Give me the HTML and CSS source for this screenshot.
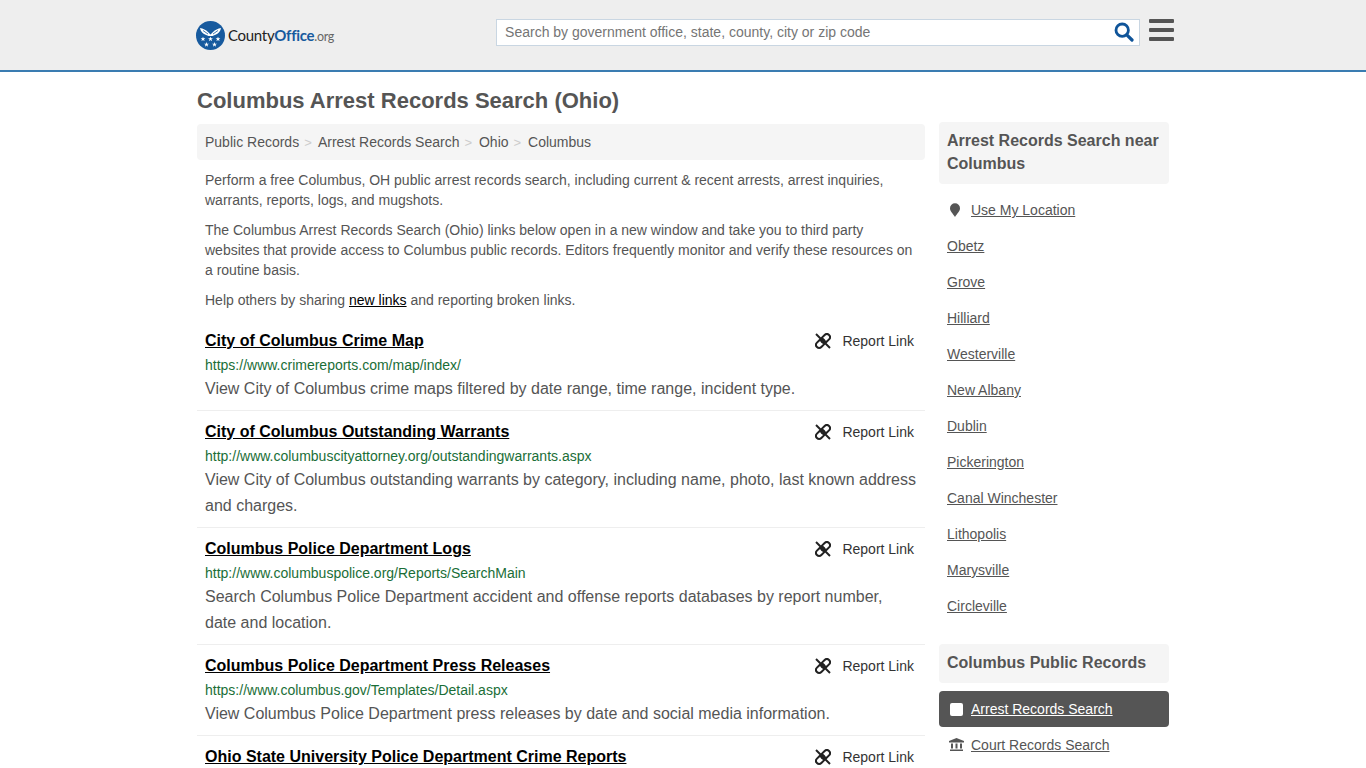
FILE: index.html
```html
<!DOCTYPE html>
<html>
<head>
    <meta charset="UTF-8">
    <title>Columbus Arrest Records Search (Ohio)</title>
    <link rel="stylesheet" href="styles.css">
</head>
<body>
    <svg class="icon-defs" width="0" height="0">
        <symbol id="unlink" viewBox="0 0 16 16">
            <g fill="none" stroke="currentColor" stroke-width="2">
                <rect x="5.500" y="2.400" width="10" height="6.200" rx="3.100" transform="rotate(-45 10.500 5.500)"/>
                <rect x="0.500" y="7.400" width="10" height="6.200" rx="3.100" transform="rotate(-45 5.500 10.500)"/>
                <path d="M1 1 15 15"/>
            </g>
        </symbol>
        <symbol id="star" viewBox="0 0 10 10">
            <path d="M5 0 6.200 3.500H10L7 5.700 8.100 9.500 5 7.200 1.900 9.500 3 5.700 0 3.500H3.800z" fill="#fff"/>
        </symbol>
    </svg>

    <div class="header">
        <div class="header-inner">
            <a class="logo" href="#">
                <svg class="logo-mark" width="29" height="29" viewBox="0 0 29 29">
                    <circle cx="14.5" cy="14.5" r="14.5" fill="#175a9e"/>
                    <path d="M4 7c3 .5 6 2 8 4l2.500 2.500L17 11c2-2 5-3.500 8-4-.5 3-2.500 5.500-5 6.500l-3.500 1.500h-4L9 13.500C6.500 12.500 4.500 10 4 7z" fill="#fff"/>
                    <path d="M7 9.500l5 3.500M22 9.500l-5 3.500" stroke="#175a9e" stroke-width=".8"/>
                    <use href="#star" x="4.500" y="15.500" width="5" height="5"/>
                    <use href="#star" x="12" y="15.500" width="5" height="5"/>
                    <use href="#star" x="19.500" y="15.500" width="5" height="5"/>
                    <use href="#star" x="8" y="21" width="5" height="5"/>
                    <use href="#star" x="16" y="21" width="5" height="5"/>
                </svg>
                <span class="logo-text">County<span class="logo-blue">Office</span><span class="logo-org">.org</span></span>
            </a>
            <div class="search-box">
                <input class="search-input" type="text" placeholder="Search by government office, state, county, city or zip code">
                <svg class="search-icon" width="20" height="20" viewBox="0 0 20 20">
                    <circle cx="8.200" cy="8.200" r="6.200" fill="none" stroke="#0f5499" stroke-width="2.800"/>
                    <path d="M12.800 12.800 18 18" stroke="#0f5499" stroke-width="3.200" stroke-linecap="round"/>
                </svg>
            </div>
            <div class="menu-button">
                <span></span>
                <span></span>
                <span></span>
            </div>
        </div>
    </div>

    <div class="page">
        <h1>Columbus Arrest Records Search (Ohio)</h1>
        <div class="columns">
            <div class="main">
                <div class="breadcrumb">
                    <a href="#">Public Records</a><span class="sep">&gt;</span>
                    <a href="#">Arrest Records Search</a><span class="sep">&gt;</span>
                    <a href="#">Ohio</a><span class="sep">&gt;</span>
                    <a href="#">Columbus</a>
                </div>
                <div class="intro">
                    <p>Perform a free Columbus, OH public arrest records search, including current &amp; recent arrests, arrest inquiries, warrants, reports, logs, and mugshots.</p>
                    <p>The Columbus Arrest Records Search (Ohio) links below open in a new window and take you to third party websites that provide access to Columbus public records. Editors frequently monitor and verify these resources on a routine basis.</p>
                    <p>Help others by sharing <a href="#">new links</a> and reporting broken links.</p>
                </div>

                <div class="result">
                    <div class="result-top">
                        <a class="result-title" href="#">City of Columbus Crime Map</a>
                        <a class="report" href="#"><svg width="16" height="16"><use href="#unlink"/></svg>Report Link</a>
                    </div>
                    <div class="result-url">https://www.crimereports.com/map/index/</div>
                    <div class="result-desc">View City of Columbus crime maps filtered by date range, time range, incident type.</div>
                </div>
                <div class="result">
                    <div class="result-top">
                        <a class="result-title" href="#">City of Columbus Outstanding Warrants</a>
                        <a class="report" href="#"><svg width="16" height="16"><use href="#unlink"/></svg>Report Link</a>
                    </div>
                    <div class="result-url">http://www.columbuscityattorney.org/outstandingwarrants.aspx</div>
                    <div class="result-desc">View City of Columbus outstanding warrants by category, including name, photo, last known address and charges.</div>
                </div>
                <div class="result">
                    <div class="result-top">
                        <a class="result-title" href="#">Columbus Police Department Logs</a>
                        <a class="report" href="#"><svg width="16" height="16"><use href="#unlink"/></svg>Report Link</a>
                    </div>
                    <div class="result-url">http://www.columbuspolice.org/Reports/SearchMain</div>
                    <div class="result-desc">Search Columbus Police Department accident and offense reports databases by report number, date and location.</div>
                </div>
                <div class="result">
                    <div class="result-top">
                        <a class="result-title" href="#">Columbus Police Department Press Releases</a>
                        <a class="report" href="#"><svg width="16" height="16"><use href="#unlink"/></svg>Report Link</a>
                    </div>
                    <div class="result-url">https://www.columbus.gov/Templates/Detail.aspx</div>
                    <div class="result-desc">View Columbus Police Department press releases by date and social media information.</div>
                </div>
                <div class="result">
                    <div class="result-top">
                        <a class="result-title" href="#">Ohio State University Police Department Crime Reports</a>
                        <a class="report" href="#"><svg width="16" height="16"><use href="#unlink"/></svg>Report Link</a>
                    </div>
                </div>
            </div>

            <div class="sidebar">
                <div class="side-title">Arrest Records Search near Columbus</div>
                <ul class="side-list">
                    <li class="location">
                        <svg width="12" height="14" viewBox="0 0 12 14"><path d="M6 14C4 10.500 1 8.500 1 5.200a5 5 0 0 1 10 0C11 8.500 8 10.500 6 14z" fill="#555"/></svg>
                        <a href="#">Use My Location</a>
                    </li>
                    <li><a href="#">Obetz</a></li>
                    <li><a href="#">Grove</a></li>
                    <li><a href="#">Hilliard</a></li>
                    <li><a href="#">Westerville</a></li>
                    <li><a href="#">New Albany</a></li>
                    <li><a href="#">Dublin</a></li>
                    <li><a href="#">Pickerington</a></li>
                    <li><a href="#">Canal Winchester</a></li>
                    <li><a href="#">Lithopolis</a></li>
                    <li><a href="#">Marysville</a></li>
                    <li><a href="#">Circleville</a></li>
                </ul>
                <div class="side-title side-title-second">Columbus Public Records</div>
                <div class="side-active">
                    <span class="check-box"></span>
                    <a href="#">Arrest Records Search</a>
                </div>
                <div class="side-court">
                    <svg width="15" height="14" viewBox="0 0 15 14">
                        <path d="M7.500 0 15 3v1.500H0V3z" fill="#555"/>
                        <path d="M2 5.500h2v5H2zM6.500 5.500h2v5h-2zM11 5.500h2v5h-2zM1 11.500h13V13H1z" fill="#555"/>
                    </svg>
                    <a href="#">Court Records Search</a>
                </div>
            </div>
        </div>
    </div>
</body>
</html>
```

FILE: styles.css
```css
html, body {
    height: 100%;
    overflow: hidden;
}

body {
    margin: 0;
    font-family: "Liberation Sans", Arial, sans-serif;
    font-size: 14px;
    color: #555;
    background-color: #fff;
}

.icon-defs {
    position: absolute;
}

.header {
    height: 70px;
    background-color: #eee;
    border-bottom: 2px solid #3a7cb1;
}

.header-inner {
    width: 982px;
    height: 70px;
    margin: 0 auto;
    padding-left: 4px;
    box-sizing: border-box;
    display: flex;
    align-items: center;
}

.logo {
    display: flex;
    align-items: center;
    text-decoration: none;
    width: 301px;
}

.logo-mark {
    margin-right: 3px;
}

.logo-text {
    font-family: Lato, sans-serif;
    font-size: 15px;
    letter-spacing: -0.3px;
    color: #222;
}

.logo-blue {
    color: #175a9e;
    font-weight: bold;
}

.logo-org {
    font-size: 12.500px;
    color: #666;
}

.search-box {
    width: 646px;
    height: 27px;
    margin-bottom: 6px;
    background-color: #fff;
    border: 1px solid #c9d6e2;
    display: flex;
    align-items: center;
    justify-content: space-between;
    padding-right: 5px;
    box-sizing: border-box;
}

.search-input {
    flex: 1;
    border: none;
    outline: none;
    padding: 0 8px;
    font-family: "Liberation Sans", Arial, sans-serif;
    font-size: 14px;
    background: transparent;
}

.search-input::placeholder {
    color: #757575;
}

.menu-button {
    margin-left: 9px;
    margin-bottom: 6px;
    width: 25px;
}

.menu-button span {
    display: block;
    height: 4px;
    background-color: #555;
    border-radius: 1px;
    margin-bottom: 5px;
}

.page {
    width: 972px;
    margin: 0 auto;
}

h1 {
    margin: 0;
    padding-top: 16px;
    font-size: 22px;
    line-height: 25px;
    font-weight: bold;
    color: #555;
}

.columns {
    display: flex;
    gap: 14px;
    margin-top: 11px;
}

.main {
    width: 728px;
}

.breadcrumb {
    background-color: #f5f5f5;
    border-radius: 4px;
    height: 36px;
    line-height: 36px;
    padding: 0 8px;
}

.breadcrumb a {
    color: #555;
    text-decoration: none;
}

.breadcrumb .sep {
    color: #ccc;
    margin: 0 3px 0 5px;
    font-size: 13px;
}

.intro {
    padding: 10px 8px 0;
}

.intro p {
    margin: 0 0 10px;
    line-height: 20px;
}

.intro a {
    color: #000;
}

.result {
    padding: 9px 8px 8px;
    border-bottom: 1px solid #eee;
}

.result:last-child {
    border-bottom: none;
}

.result-top {
    display: flex;
    justify-content: space-between;
    align-items: center;
    height: 24px;
}

.result-title {
    font-size: 16px;
    font-weight: bold;
    color: #000;
}

.report {
    display: flex;
    align-items: center;
    color: #333;
    text-decoration: none;
    padding-right: 3px;
}

.report svg {
    margin-right: 11px;
    color: #222;
}

.result-url {
    color: #1a6e37;
    line-height: 20px;
    margin-top: 2px;
    margin-bottom: 1px;
}

.result-desc {
    font-size: 16px;
    line-height: 26px;
}

.sidebar {
    width: 230px;
    margin-top: -2px;
}

.side-title {
    background-color: #f5f5f5;
    border-radius: 4px;
    padding: 7px 8px 5px;
    font-size: 16px;
    font-weight: bold;
    line-height: 23px;
    height: 50px;
    color: #555;
}

.side-title-second {
    height: 27px;
    margin-top: 20px;
}

.side-list {
    list-style: none;
    margin: 8px 0 0;
    padding: 0 8px;
}

.side-list li {
    height: 36px;
    line-height: 36px;
}

.side-list a, .side-court a {
    color: #555;
}

.location {
    display: flex;
    align-items: center;
}

.location svg {
    margin: 0 10px 0 2px;
}

.side-active {
    display: flex;
    align-items: center;
    background-color: #555;
    border-radius: 4px;
    height: 36px;
    margin-top: 8px;
    padding: 0 11px;
}

.side-active a {
    color: #fff;
}

.check-box {
    width: 13px;
    height: 13px;
    background-color: #fff;
    border-radius: 2px;
    margin-right: 8px;
}

.side-court {
    display: flex;
    align-items: center;
    height: 36px;
    padding: 0 10px;
}

.side-court svg {
    margin-right: 7px;
}
```
